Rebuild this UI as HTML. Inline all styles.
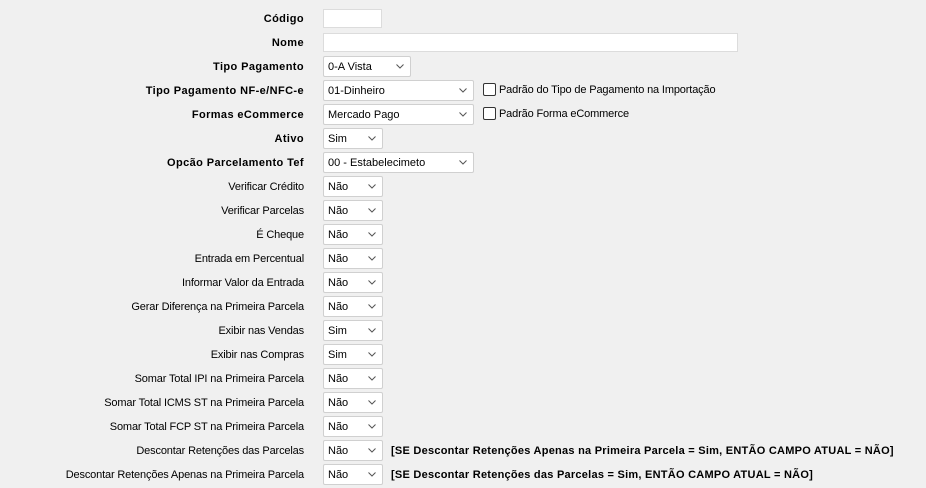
<!DOCTYPE html>
<html><head><meta charset="utf-8"><style>
body{margin:0;width:926px;height:488px;background:#f0f0f0;font-family:"Liberation Sans",Tahoma,sans-serif;font-size:11px;color:#000;position:relative;overflow:hidden}
.l{position:absolute;right:622px;white-space:nowrap;line-height:14px;margin-top:1px;letter-spacing:-0.15px}
.b{font-weight:bold;letter-spacing:0.4px}
.i{position:absolute;left:323px;height:19px;background:#fff;border:1px solid #dcdcdc;box-sizing:border-box}
.s{position:absolute;left:323px;height:21px;background:#fff;border:1px solid #d0d0d0;border-radius:2px;box-sizing:border-box;padding-left:4px;line-height:21px;white-space:nowrap}
.s svg{position:absolute;right:6px;top:7px}
.cb{position:absolute;left:483px;width:11px;height:11px;border:1px solid #333;border-radius:2px;background:#fff}
.ct{position:absolute;left:499px;line-height:14px;white-space:nowrap;letter-spacing:-0.15px}
.n{position:absolute;left:391px;font-weight:bold;white-space:nowrap;line-height:14px;letter-spacing:0.25px;margin-top:1px}
</style></head><body>
<div class="l b" style="top:11px">Código</div><div class="i" style="top:9px;width:59px"></div>
<div class="l b" style="top:35px">Nome</div><div class="i" style="top:33px;width:415px"></div>
<div class="l b" style="top:59px">Tipo Pagamento</div><div class="s" style="top:56px;width:88px">0-A Vista<svg width="8" height="5"><path d="M0.5 0.5L4 4L7.5 0.5" stroke="#555" fill="none"/></svg></div>
<div class="l b" style="top:83px">Tipo Pagamento NF-e/NFC-e</div><div class="s" style="top:80px;width:151px">01-Dinheiro<svg width="8" height="5"><path d="M0.5 0.5L4 4L7.5 0.5" stroke="#555" fill="none"/></svg></div>
<div class="cb" style="top:83px"></div><div class="ct" style="top:83px">Padrão do Tipo de Pagamento na Importação</div>
<div class="l b" style="top:107px">Formas eCommerce</div><div class="s" style="top:104px;width:151px">Mercado Pago<svg width="8" height="5"><path d="M0.5 0.5L4 4L7.5 0.5" stroke="#555" fill="none"/></svg></div>
<div class="cb" style="top:107px"></div><div class="ct" style="top:107px">Padrão Forma eCommerce</div>
<div class="l b" style="top:131px">Ativo</div><div class="s" style="top:128px;width:60px">Sim<svg width="8" height="5"><path d="M0.5 0.5L4 4L7.5 0.5" stroke="#555" fill="none"/></svg></div>
<div class="l b" style="top:155px">Opcão Parcelamento Tef</div><div class="s" style="top:152px;width:151px">00 - Estabelecimeto<svg width="8" height="5"><path d="M0.5 0.5L4 4L7.5 0.5" stroke="#555" fill="none"/></svg></div>

<div class="l" style="top:179px">Verificar Crédito</div><div class="s" style="top:176px;width:60px">Não<svg width="8" height="5"><path d="M0.5 0.5L4 4L7.5 0.5" stroke="#555" fill="none"/></svg></div>
<div class="l" style="top:203px">Verificar Parcelas</div><div class="s" style="top:200px;width:60px">Não<svg width="8" height="5"><path d="M0.5 0.5L4 4L7.5 0.5" stroke="#555" fill="none"/></svg></div>
<div class="l" style="top:227px">É Cheque</div><div class="s" style="top:224px;width:60px">Não<svg width="8" height="5"><path d="M0.5 0.5L4 4L7.5 0.5" stroke="#555" fill="none"/></svg></div>
<div class="l" style="top:251px">Entrada em Percentual</div><div class="s" style="top:248px;width:60px">Não<svg width="8" height="5"><path d="M0.5 0.5L4 4L7.5 0.5" stroke="#555" fill="none"/></svg></div>
<div class="l" style="top:275px">Informar Valor da Entrada</div><div class="s" style="top:272px;width:60px">Não<svg width="8" height="5"><path d="M0.5 0.5L4 4L7.5 0.5" stroke="#555" fill="none"/></svg></div>
<div class="l" style="top:299px">Gerar Diferença na Primeira Parcela</div><div class="s" style="top:296px;width:60px">Não<svg width="8" height="5"><path d="M0.5 0.5L4 4L7.5 0.5" stroke="#555" fill="none"/></svg></div>
<div class="l" style="top:323px">Exibir nas Vendas</div><div class="s" style="top:320px;width:60px">Sim<svg width="8" height="5"><path d="M0.5 0.5L4 4L7.5 0.5" stroke="#555" fill="none"/></svg></div>
<div class="l" style="top:347px">Exibir nas Compras</div><div class="s" style="top:344px;width:60px">Sim<svg width="8" height="5"><path d="M0.5 0.5L4 4L7.5 0.5" stroke="#555" fill="none"/></svg></div>
<div class="l" style="top:371px">Somar Total IPI na Primeira Parcela</div><div class="s" style="top:368px;width:60px">Não<svg width="8" height="5"><path d="M0.5 0.5L4 4L7.5 0.5" stroke="#555" fill="none"/></svg></div>
<div class="l" style="top:395px">Somar Total ICMS ST na Primeira Parcela</div><div class="s" style="top:392px;width:60px">Não<svg width="8" height="5"><path d="M0.5 0.5L4 4L7.5 0.5" stroke="#555" fill="none"/></svg></div>
<div class="l" style="top:419px">Somar Total FCP ST na Primeira Parcela</div><div class="s" style="top:416px;width:60px">Não<svg width="8" height="5"><path d="M0.5 0.5L4 4L7.5 0.5" stroke="#555" fill="none"/></svg></div>
<div class="l" style="top:443px">Descontar Retenções das Parcelas</div><div class="s" style="top:440px;width:60px">Não<svg width="8" height="5"><path d="M0.5 0.5L4 4L7.5 0.5" stroke="#555" fill="none"/></svg></div>
<div class="n" style="top:443px">[SE Descontar Retenções Apenas na Primeira Parcela = Sim, ENTÃO CAMPO ATUAL = NÃO]</div>
<div class="l" style="top:467px">Descontar Retenções Apenas na Primeira Parcela</div><div class="s" style="top:464px;width:60px">Não<svg width="8" height="5"><path d="M0.5 0.5L4 4L7.5 0.5" stroke="#555" fill="none"/></svg></div>
<div class="n" style="top:467px">[SE Descontar Retenções das Parcelas = Sim, ENTÃO CAMPO ATUAL = NÃO]</div>
</body></html>
